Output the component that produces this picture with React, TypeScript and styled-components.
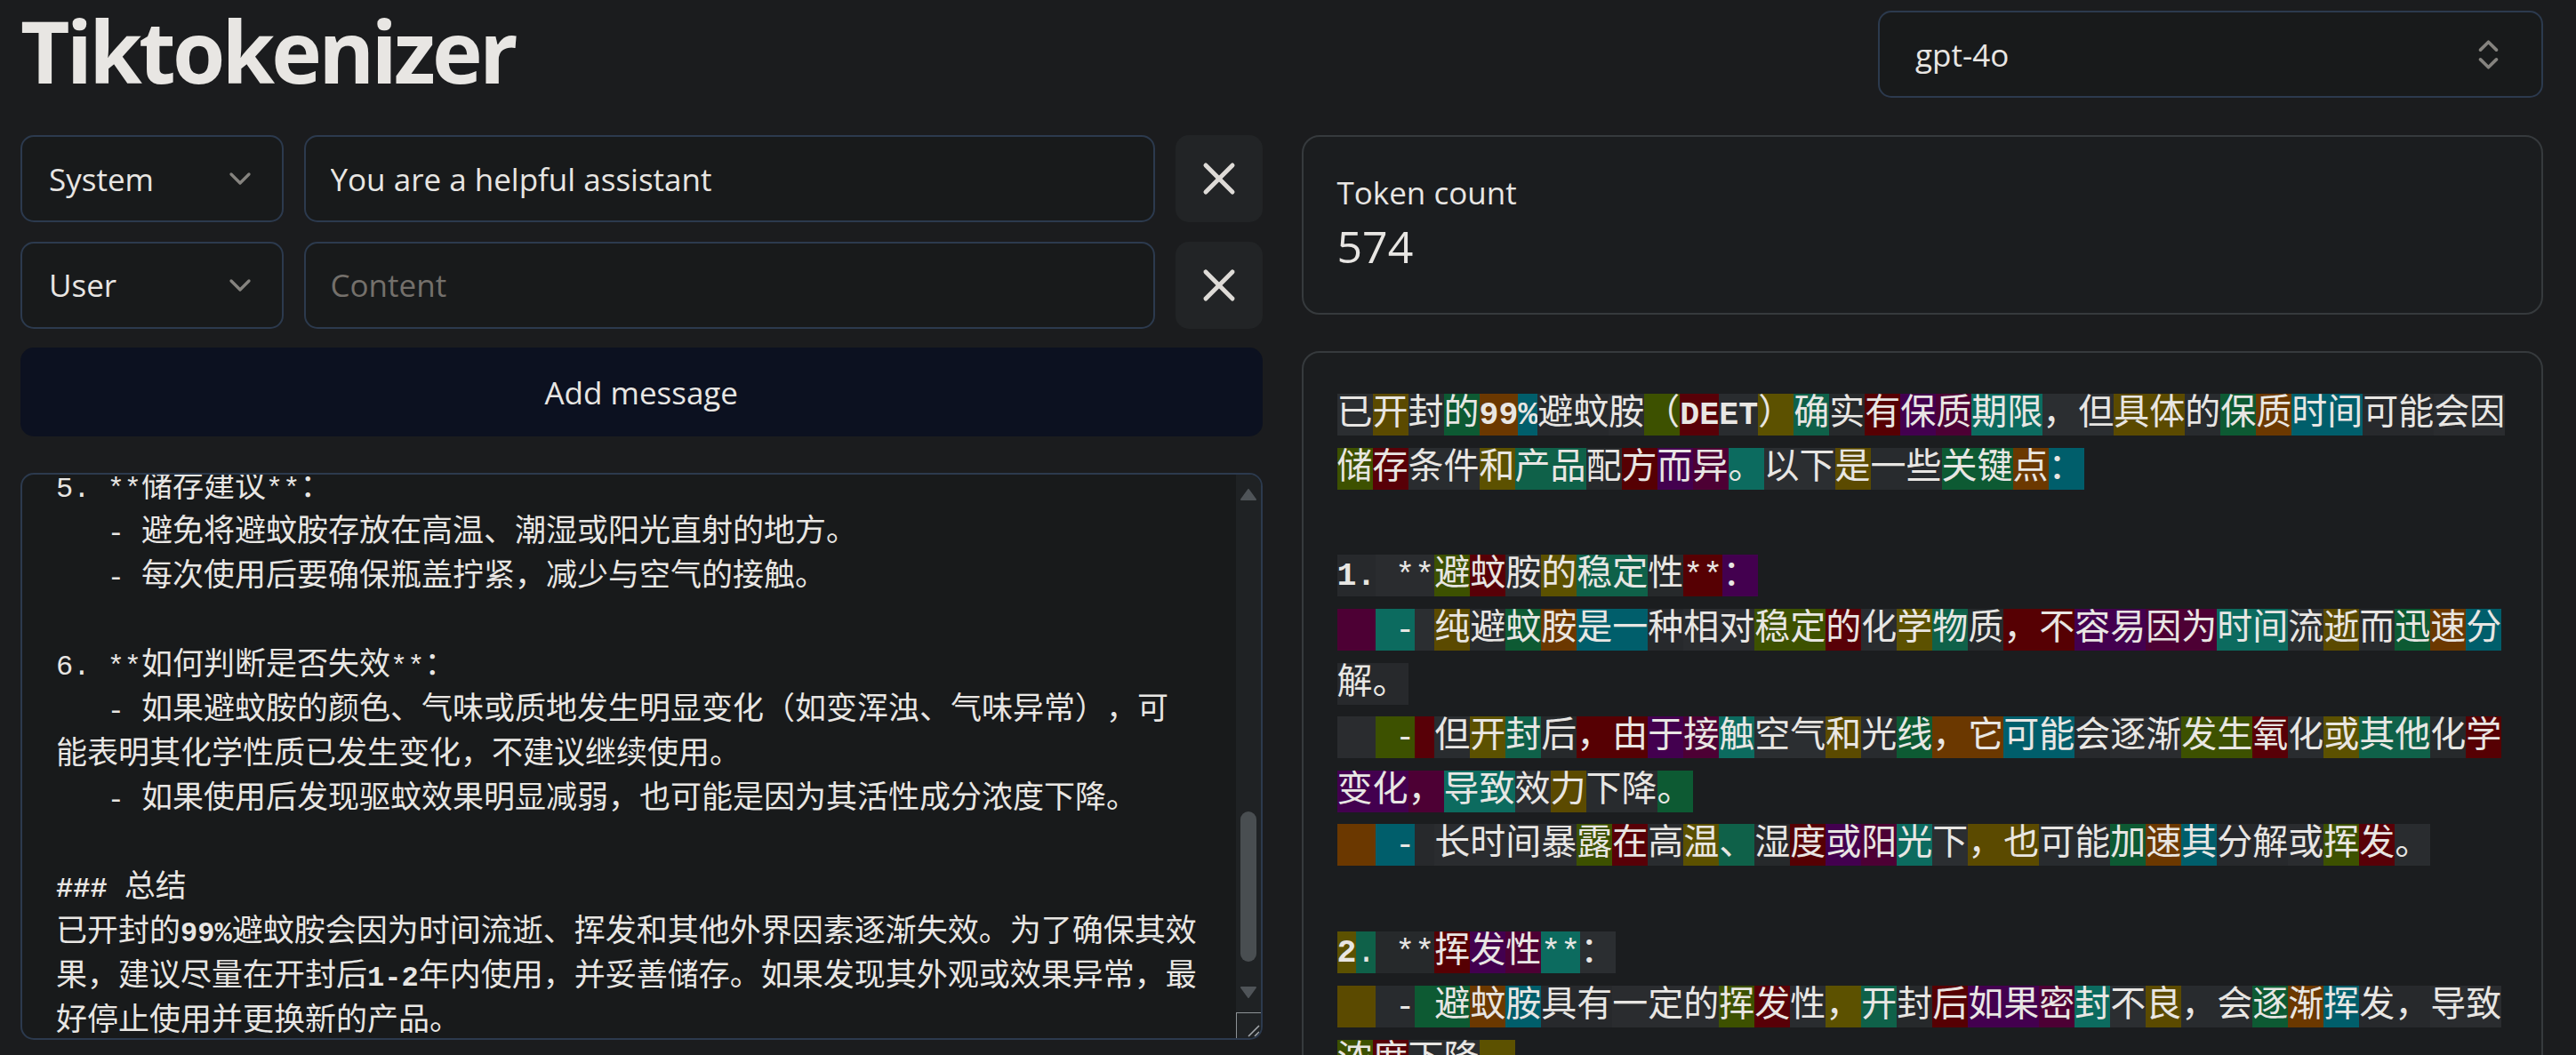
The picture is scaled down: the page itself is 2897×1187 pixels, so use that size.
import React from "react";
import styled, { createGlobalStyle } from "styled-components";
import { X, ChevronDown, ChevronsUpDown } from "lucide-react";

const GlobalStyle = createGlobalStyle`
  html, body {
    margin: 0;
    padding: 0;
    background: #1b1c1e;
    overflow: hidden;
  }
  body {
    color: #e8e6e3;
    font-family: "Open Sans", "Noto Sans", "Noto Sans CJK SC", sans-serif;
    text-spacing-trim: space-all;
  }
  * {
    box-sizing: border-box;
  }
`;

// token colours cycle by index (dark-mode versions of the pastel palette)
const TOKEN_COLORS = [
  "#2b2e31",
  "#5b4a00",
  "#282b2e",
  "#0d5a33",
  "#6b3800",
  "#005e6b",
  "#27292c",
  "#2a2c2f",
  "#3d5100",
  "#580007",
  "#292c2f",
  "#5c5100",
  "#0f6149",
  "#26292b",
  "#560003",
  "#43004f",
  "#4d0034",
  "#0c6b5f",
];

const TOKEN_LINES: string[][] = [
  ["已", "开", "封", "的", "99", "%", "避蚊", "胺", "（", "DE", "ET", "）", "确", "实", "有", "保", "质", "期限", "，但", "具体", "的", "保", "质", "时间", "可能", "会因"],
  ["储", "存", "条件", "和", "产品", "配", "方", "而", "异", "。", "以下", "是", "一些", "关键", "点", "："],
  [],
  ["1.", " **", "避", "蚊", "胺", "的", "稳定", "性", "**", "："],
  ["  ", " -", " ", "纯", "避", "蚊", "胺", "是一", "种", "相对", "稳定", "的", "化", "学", "物", "质", "，不", "容易", "因为", "时间", "流", "逝", "而", "迅", "速", "分"],
  ["解。"],
  ["  ", " -", " ", "但", "开", "封", "后", "，由", "于", "接", "触", "空气", "和", "光", "线", "，它", "可能", "会", "逐渐", "发生", "氧", "化", "或", "其他", "化", "学"],
  ["变化", "，", "导致", "效", "力", "下降", "。"],
  ["  ", " -", " ", "长时间暴", "露", "在", "高", "温", "、", "湿", "度", "或", "阳", "光", "下", "，也", "可能", "加", "速", "其", "分解", "或", "挥", "发", "。"],
  [],
  ["2", ".", " **", "挥", "发", "性", "**", "："],
  ["  ", " -", " 避", "蚊", "胺", "具有", "一定的", "挥", "发", "性", "，", "开", "封", "后", "如果", "密", "封", "不", "良", "，会", "逐", "渐", "挥", "发，", "导致"],
  ["浓", "度", "下降", "。"],
];

const EDITOR_LINES = [
  "5. **储存建议**：",
  "   - 避免将避蚊胺存放在高温、潮湿或阳光直射的地方。",
  "   - 每次使用后要确保瓶盖拧紧，减少与空气的接触。",
  "",
  "6. **如何判断是否失效**：",
  "   - 如果避蚊胺的颜色、气味或质地发生明显变化（如变浑浊、气味异常），可",
  "能表明其化学性质已发生变化，不建议继续使用。",
  "   - 如果使用后发现驱蚊效果明显减弱，也可能是因为其活性成分浓度下降。",
  "",
  "### 总结",
  "已开封的99%避蚊胺会因为时间流逝、挥发和其他外界因素逐渐失效。为了确保其效",
  "果，建议尽量在开封后1-2年内使用，并妥善储存。如果发现其外观或效果异常，最",
  "好停止使用并更换新的产品。",
];

const Page = styled.main`
  padding: 12px 37px 0 23px;
`;

const Header = styled.header`
  display: flex;
  justify-content: space-between;
  align-items: center;
  height: 98px;
`;

const Title = styled.h1`
  margin: 0 0 8px;
  font-size: 96px;
  line-height: 130px;
  font-weight: 700;
  letter-spacing: -3.8px;
`;

const SelectBox = styled.div<{ $width?: string }>`
  width: ${(p) => p.$width || "auto"};
  height: 98px;
  flex: none;
  display: flex;
  align-items: center;
  justify-content: space-between;
  background: #181a1b;
  border: 2px solid #2c3a4e;
  border-radius: 15px;
  font-size: 35px;

  svg {
    color: #85837f;
  }
`;

const ModelSelect = styled(SelectBox)`
  padding: 0 38px 0 40px;
`;

const RoleSelect = styled(SelectBox)`
  padding: 0 27px 0 30px;
`;

const Columns = styled.div`
  display: grid;
  grid-template-columns: 1fr 1fr;
  column-gap: 44px;
  margin-top: 42px;
  align-items: start;
`;

const Column = styled.div`
  display: flex;
  flex-direction: column;
  min-width: 0;
`;

const MessageList = styled.div`
  display: flex;
  flex-direction: column;
  gap: 21.5px;
`;

const MessageRow = styled.div`
  display: flex;
  align-items: center;
  gap: 22.5px;
`;

const ContentInput = styled.input`
  flex: 1;
  min-width: 0;
  height: 98px;
  padding: 0 28px;
  background: #181a1b;
  border: 2px solid #2c3a4e;
  border-radius: 15px;
  color: #e8e6e3;
  font-family: inherit;
  font-size: 35px;
  outline: none;

  &::placeholder {
    color: #74706b;
  }
`;

const IconButton = styled.button`
  width: 98px;
  height: 98px;
  flex: none;
  display: flex;
  align-items: center;
  justify-content: center;
  padding: 0;
  border: none;
  border-radius: 15px;
  background: #222426;
  color: #dedbd7;
`;

const AddButton = styled.button`
  height: 100px;
  width: 100%;
  border: none;
  border-radius: 15px;
  background: #0c1120;
  color: #e8e6e3;
  font-family: inherit;
  font-size: 35px;
  font-weight: 500;
`;

const Editor = styled.div`
  margin-top: 41px;
  height: 638px;
  display: flex;
  background: #181a1b;
  border: 2px solid #2c3a4e;
  border-radius: 15px;
  overflow: hidden;
`;

const EditorText = styled.div`
  flex: 1;
  min-width: 0;
  overflow: hidden;
  padding-left: 38px;
  font-family: "Liberation Mono", "Noto Sans CJK SC", monospace;
  font-size: 35px;
  line-height: 50px;
`;

// content is scrolled a few pixels past its top
const EditorLines = styled.div`
  margin-top: -9px;
`;

const CodeLine = styled.div`
  height: 50px;
  white-space: pre;
`;

const Ascii = styled.span<{ $bold?: boolean }>`
  font-size: 0.915em;
  font-weight: ${(p) => (p.$bold ? 700 : 400)};
`;

const ScrollBar = styled.div`
  width: 28px;
  flex: none;
  display: flex;
  flex-direction: column;
  background: #1f2224;
`;

const ScrollTrack = styled.div`
  flex: 1;
  display: flex;
  flex-direction: column;
  align-items: center;
  padding-top: 16px;
`;

const Thumb = styled.div`
  width: 18px;
  height: 169px;
  margin: 350px 0 28px;
  border-radius: 9px;
  background: #494e51;
`;

const ResizeCorner = styled.div`
  height: 29px;
  flex: none;
  border-top: 1px solid #8d9296;
  border-left: 1px solid #8d9296;
  display: flex;
  align-items: flex-end;
  justify-content: flex-end;
`;

const CountCard = styled.section`
  height: 202px;
  padding: 38px 38px;
  background: #1b1d1f;
  border: 2px solid #363a3d;
  border-radius: 20px;
`;

const CountLabel = styled.div`
  font-size: 35px;
  line-height: 50px;
`;

const CountValue = styled.div`
  font-size: 50px;
  line-height: 70px;
`;

const TokenCard = styled.section`
  margin-top: 41px;
  padding: 40px 38px;
  background: #1b1d1f;
  border: 2px solid #363a3d;
  border-radius: 20px;
  font-family: "Liberation Mono", "Noto Sans CJK SC", monospace;
  font-size: 40px;
  line-height: 60px;
`;

const TokenLine = styled.div`
  min-height: 60px;
  white-space: pre;
`;

const Token = styled.span<{ $bg: string }>`
  background: ${(p) => p.$bg};
  padding: 1px 0;
`;

const EDITOR_BOLD = /^(###|99%|1-2)$/;

function renderRuns(text: string, isBold: (run: string) => boolean) {
  return text
    .split(/([\x20-\x7e]+)/)
    .filter(Boolean)
    .map((part, i) =>
      /^[\x20-\x7e]+$/.test(part) ? (
        <Ascii key={i} $bold={isBold(part.trim())}>
          {part}
        </Ascii>
      ) : (
        <React.Fragment key={i}>{part}</React.Fragment>
      )
    );
}

const editorBold = (run: string) => EDITOR_BOLD.test(run);
const tokenBold = (run: string) => /[0-9A-Z%]/.test(run);

const Arrow = ({ down }: { down?: boolean }) => (
  <svg width="18" height="13" viewBox="0 0 18 13">
    <polygon
      points={down ? "1,1 17,1 9,12" : "9,1 17,12 1,12"}
      fill="#4f5458"
      stroke="#4f5458"
      strokeLinejoin="round"
      strokeWidth="2"
    />
  </svg>
);

const Grip = () => (
  <svg width="20" height="20" viewBox="0 0 20 20">
    <path d="M18 6 6 18M18 13l-5 5" stroke="#a3a7ab" strokeWidth="1.6" />
  </svg>
);

export default function App() {
  let tokenIndex = 0;

  return (
    <>
      <GlobalStyle />
      <Page>
        <Header>
          <Title>Tiktokenizer</Title>
          <ModelSelect $width="748px">
            <span>gpt-4o</span>
            <ChevronsUpDown size={43} strokeWidth={2} />
          </ModelSelect>
        </Header>

        <Columns>
          <Column>
            <MessageList>
              <MessageRow>
                <RoleSelect $width="296px">
                  <span>System</span>
                  <ChevronDown size={40} strokeWidth={2} />
                </RoleSelect>
                <ContentInput defaultValue="You are a helpful assistant" />
                <IconButton>
                  <X size={60} strokeWidth={2} />
                </IconButton>
              </MessageRow>
              <MessageRow>
                <RoleSelect $width="296px">
                  <span>User</span>
                  <ChevronDown size={40} strokeWidth={2} />
                </RoleSelect>
                <ContentInput placeholder="Content" />
                <IconButton>
                  <X size={60} strokeWidth={2} />
                </IconButton>
              </MessageRow>
              <AddButton>Add message</AddButton>
            </MessageList>

            <Editor>
              <EditorText>
                <EditorLines>
                  {EDITOR_LINES.map((line, i) => (
                    <CodeLine key={i}>{renderRuns(line, editorBold)}</CodeLine>
                  ))}
                </EditorLines>
              </EditorText>
              <ScrollBar>
                <ScrollTrack>
                  <Arrow />
                  <Thumb />
                  <Arrow down />
                </ScrollTrack>
                <ResizeCorner>
                  <Grip />
                </ResizeCorner>
              </ScrollBar>
            </Editor>
          </Column>

          <Column>
            <CountCard>
              <CountLabel>Token count</CountLabel>
              <CountValue>574</CountValue>
            </CountCard>

            <TokenCard>
              {TOKEN_LINES.map((tokens, li) => (
                <TokenLine key={li}>
                  {tokens.map((tok, ti) => {
                    const color = TOKEN_COLORS[tokenIndex % TOKEN_COLORS.length];
                    tokenIndex += 1;
                    return (
                      <Token key={ti} $bg={color}>
                        {renderRuns(tok, tokenBold)}
                      </Token>
                    );
                  })}
                </TokenLine>
              ))}
            </TokenCard>
          </Column>
        </Columns>
      </Page>
    </>
  );
}
